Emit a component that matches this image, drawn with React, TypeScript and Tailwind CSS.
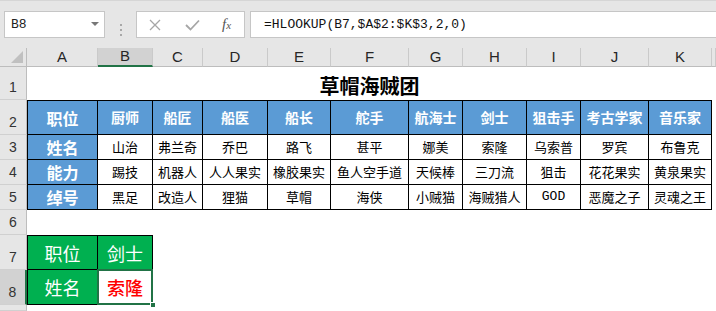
import { Fragment, ReactNode } from "react"

const letters = ["A", "B", "C", "D", "E", "F", "G", "H", "I", "J", "K", ""]

const rows = [
  ["职位", "厨师", "船匠", "船医", "船长", "舵手", "航海士", "剑士", "狙击手", "考古学家", "音乐家"],
  ["姓名", "山治", "弗兰奇", "乔巴", "路飞", "甚平", "娜美", "索隆", "乌索普", "罗宾", "布鲁克"],
  ["能力", "踢技", "机器人", "人人果实", "橡胶果实", "鱼人空手道", "天候棒", "三刀流", "狙击", "花花果实", "黄泉果实"],
  ["绰号", "黑足", "改造人", "狸猫", "草帽", "海侠", "小贼猫", "海贼猎人", "GOD", "恶魔之子", "灵魂之王"],
]

const RowHead = ({ n, active }: { n?: number; active?: boolean }) => (
  <div
    className={`flex items-end justify-center pb-[1px] text-[14px] text-[#333] font-['Liberation_Sans'] border-b border-[#d0d0d0] ${
      active ? "bg-[#d2d2d2] border-r-2 border-r-[#217346]" : "bg-[#e6e6e6] border-r border-r-[#bdbdbd]"
    }`}
  >
    {n}
  </div>
)

const Cell = ({ children, className }: { children?: ReactNode; className?: string }) => (
  <div className={`flex items-center justify-center border-r border-b border-black whitespace-nowrap ${className ?? ""}`}>
    {children}
  </div>
)

export default function App() {
  return (
    <div className="w-[716px] h-[311px] overflow-hidden bg-white font-['Noto_Sans_CJK_SC',sans-serif]">
      {/* formula bar */}
      <div className="h-[48px] bg-[#e6e6e6] border-t border-[#d6d6d6] pt-[10px] flex">
        <div className="ml-[4px] w-[101px] h-[27px] bg-white border border-[#c6c6c6] flex items-center justify-between pl-[6px] pr-[5px]">
          <span className="font-['Liberation_Mono'] text-[13px] text-[#222]">B8</span>
          <svg width="8" height="5" viewBox="0 0 8 5">
            <polygon points="0,0 8,0 4,4" fill="#777" />
          </svg>
        </div>
        <div className="w-[31px] flex flex-col items-center justify-center gap-[3px]">
          <span className="w-[2px] h-[2px] bg-[#a8a8a8]" />
          <span className="w-[2px] h-[2px] bg-[#a8a8a8]" />
          <span className="w-[2px] h-[2px] bg-[#a8a8a8]" />
        </div>
        <div className="w-[109px] h-[27px] bg-white border border-[#c6c6c6] flex items-center pl-[12px]">
          <svg width="12" height="12" viewBox="0 0 12 12">
            <path d="M1 1 L11 11 M11 1 L1 11" stroke="#a6a6a6" strokeWidth="1.3" />
          </svg>
          <svg className="ml-[24px]" width="15" height="12" viewBox="0 0 15 12">
            <path d="M1 6 L5.5 10.5 L14 1.5" stroke="#a6a6a6" strokeWidth="1.8" fill="none" />
          </svg>
          <span className="ml-[22px] italic font-['Liberation_Serif'] text-[15px] text-[#555] leading-none">
            f<span className="text-[11px]">x</span>
          </span>
        </div>
        <div className="ml-[5px] flex-1 h-[27px] bg-white border-y border-l border-[#c6c6c6] flex items-center pl-[13px] font-['Liberation_Mono'] text-[13px] text-[#111]">
          =HLOOKUP(B7,$A$2:$K$3,2,0)
        </div>
      </div>

      {/* sheet */}
      <div className="grid grid-cols-[27px_71px_55px_50px_65px_63px_78px_54px_64px_54px_68px_63px_4px] grid-rows-[19px_33px_35px_25px_25px_25px_25px_35px_35px_6px]">
        <div className="bg-[#e6e6e6] border-r border-b border-[#bdbdbd] flex items-end justify-end pr-[3px] pb-[3px]">
          <svg width="12" height="12" viewBox="0 0 12 12">
            <polygon points="12,0 12,12 0,12" fill="#c0c0c0" />
          </svg>
        </div>
        {letters.map((l, i) => (
          <div
            key={i}
            className={`flex items-center justify-center text-[15px] text-[#262626] font-['Liberation_Sans'] border-r border-r-[#cacaca] ${
              l === "B" ? "bg-[#d2d2d2] border-b-2 border-b-[#217346]" : "bg-[#e6e6e6] border-b border-b-[#bdbdbd]"
            }`}
          >
            {l}
          </div>
        ))}

        <RowHead n={1} />
        <div className="col-span-11 flex items-center justify-center pt-[4px] text-[20px] font-bold text-black">
          草帽海贼团
        </div>
        <div />

        {rows.map((r, ri) => (
          <Fragment key={ri}>
            <RowHead n={ri + 2} />
            {r.map((t, ci) => (
              <Cell
                key={ci}
                className={`${ri === 0 ? "border-t" : ""} ${ci === 0 ? "border-l" : ""} ${
                  ri === 0 || ci === 0
                    ? `bg-[#5b9bd5] text-white font-bold ${ci === 0 ? "text-[16px]" : "text-[14px]"}`
                    : "text-[13px] text-black"
                } ${t === "GOD" ? "font-['Liberation_Mono']" : ""}`}
              >
                {t}
              </Cell>
            ))}
            <div />
          </Fragment>
        ))}

        <RowHead n={6} />
        <div className="col-span-12" />

        <RowHead n={7} />
        <Cell className="border-t border-l bg-[#00b050] text-white text-[18px] pt-[2px]">职位</Cell>
        <Cell className="border-t bg-[#00b050] text-white text-[18px] pt-[2px]">剑士</Cell>
        <div className="col-span-10" />

        <RowHead n={8} active />
        <Cell className="border-l bg-[#00b050] text-white text-[18px]">姓名</Cell>
        <Cell className="relative text-[#ff0000] text-[18px] font-medium">
          索隆
          <div className="absolute -left-[1px] -top-[1px] -right-[1px] -bottom-[1px] border-2 border-[#217346]" />
          <div className="absolute -right-[4px] -bottom-[4px] w-[6px] h-[6px] bg-[#217346] border border-white" />
        </Cell>
        <div className="col-span-10" />

        <RowHead />
        <div className="col-span-12" />
      </div>
    </div>
  )
}
